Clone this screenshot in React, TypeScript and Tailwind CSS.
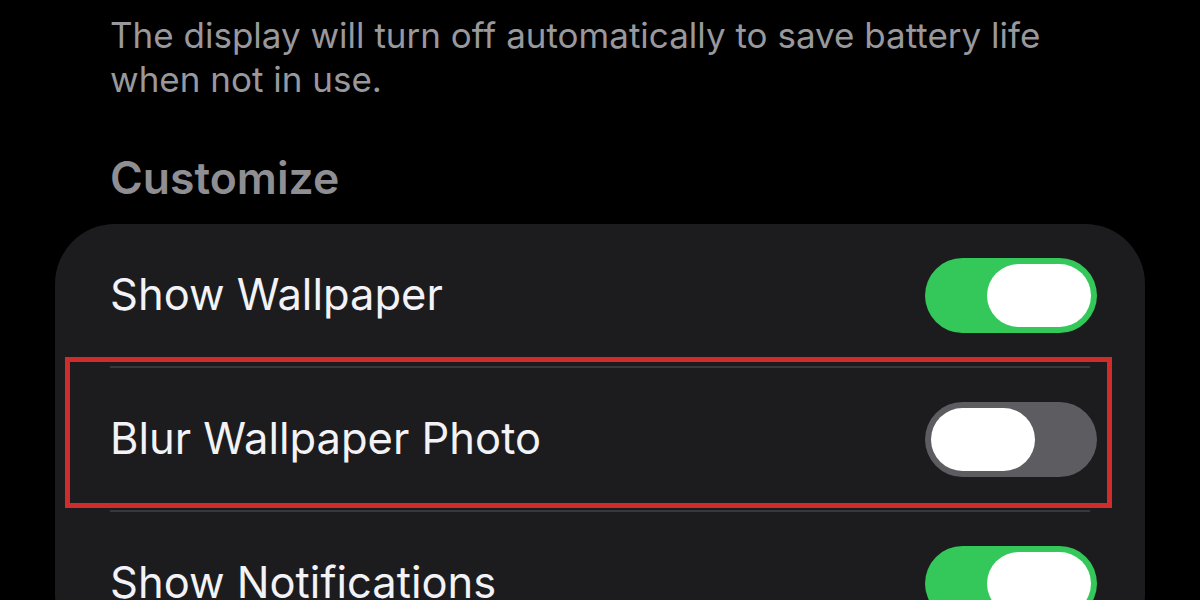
import React from "react";

function Toggle({ on }: { on: boolean }) {
  return (
    <div
      className={`flex h-[75px] w-[172px] shrink-0 items-center rounded-full p-[6px] ${
        on ? "justify-end bg-[#34c759]" : "justify-start bg-[#5c5c61]"
      }`}
    >
      <div className="h-[63px] w-[104px] rounded-full bg-white" />
    </div>
  );
}

function Row({ label, on }: { label: string; on: boolean }) {
  return (
    <div className="flex h-[142px] items-center justify-between pr-[48px]">
      <span className="text-[43.5px] leading-none text-[#f2f2f7]">{label}</span>
      <Toggle on={on} />
    </div>
  );
}

export default function App() {
  return (
    <div
      className="h-[600px] w-[1200px] overflow-hidden bg-black"
      style={{ fontFamily: "Inter, 'Liberation Sans', sans-serif" }}
    >
      <p className="pl-[110px] pt-[13px] text-[35px] leading-[44px] text-[#98989d]">
        The display will turn off automatically to save battery life
        <br />
        when not in use.
      </p>

      <h2 className="mt-[53px] pl-[110px] text-[44.5px] font-semibold leading-[48px] text-[#8e8e93]">
        Customize
      </h2>

      <div className="relative ml-[55px] mt-[22px] w-[1090px] rounded-[60px] bg-[#1c1c1e] pl-[55px]">
        <Row label="Show Wallpaper" on={true} />
        <div className="mr-[55px] h-[2px] bg-[#38383a]" />
        <Row label="Blur Wallpaper Photo" on={false} />
        <div className="mr-[55px] h-[2px] bg-[#38383a]" />
        <Row label="Show Notifications" on={true} />

        <div className="pointer-events-none absolute left-[10px] right-[33px] top-[133px] h-[151px] border-[5px] border-[#d12c2c]" />
      </div>
    </div>
  );
}
